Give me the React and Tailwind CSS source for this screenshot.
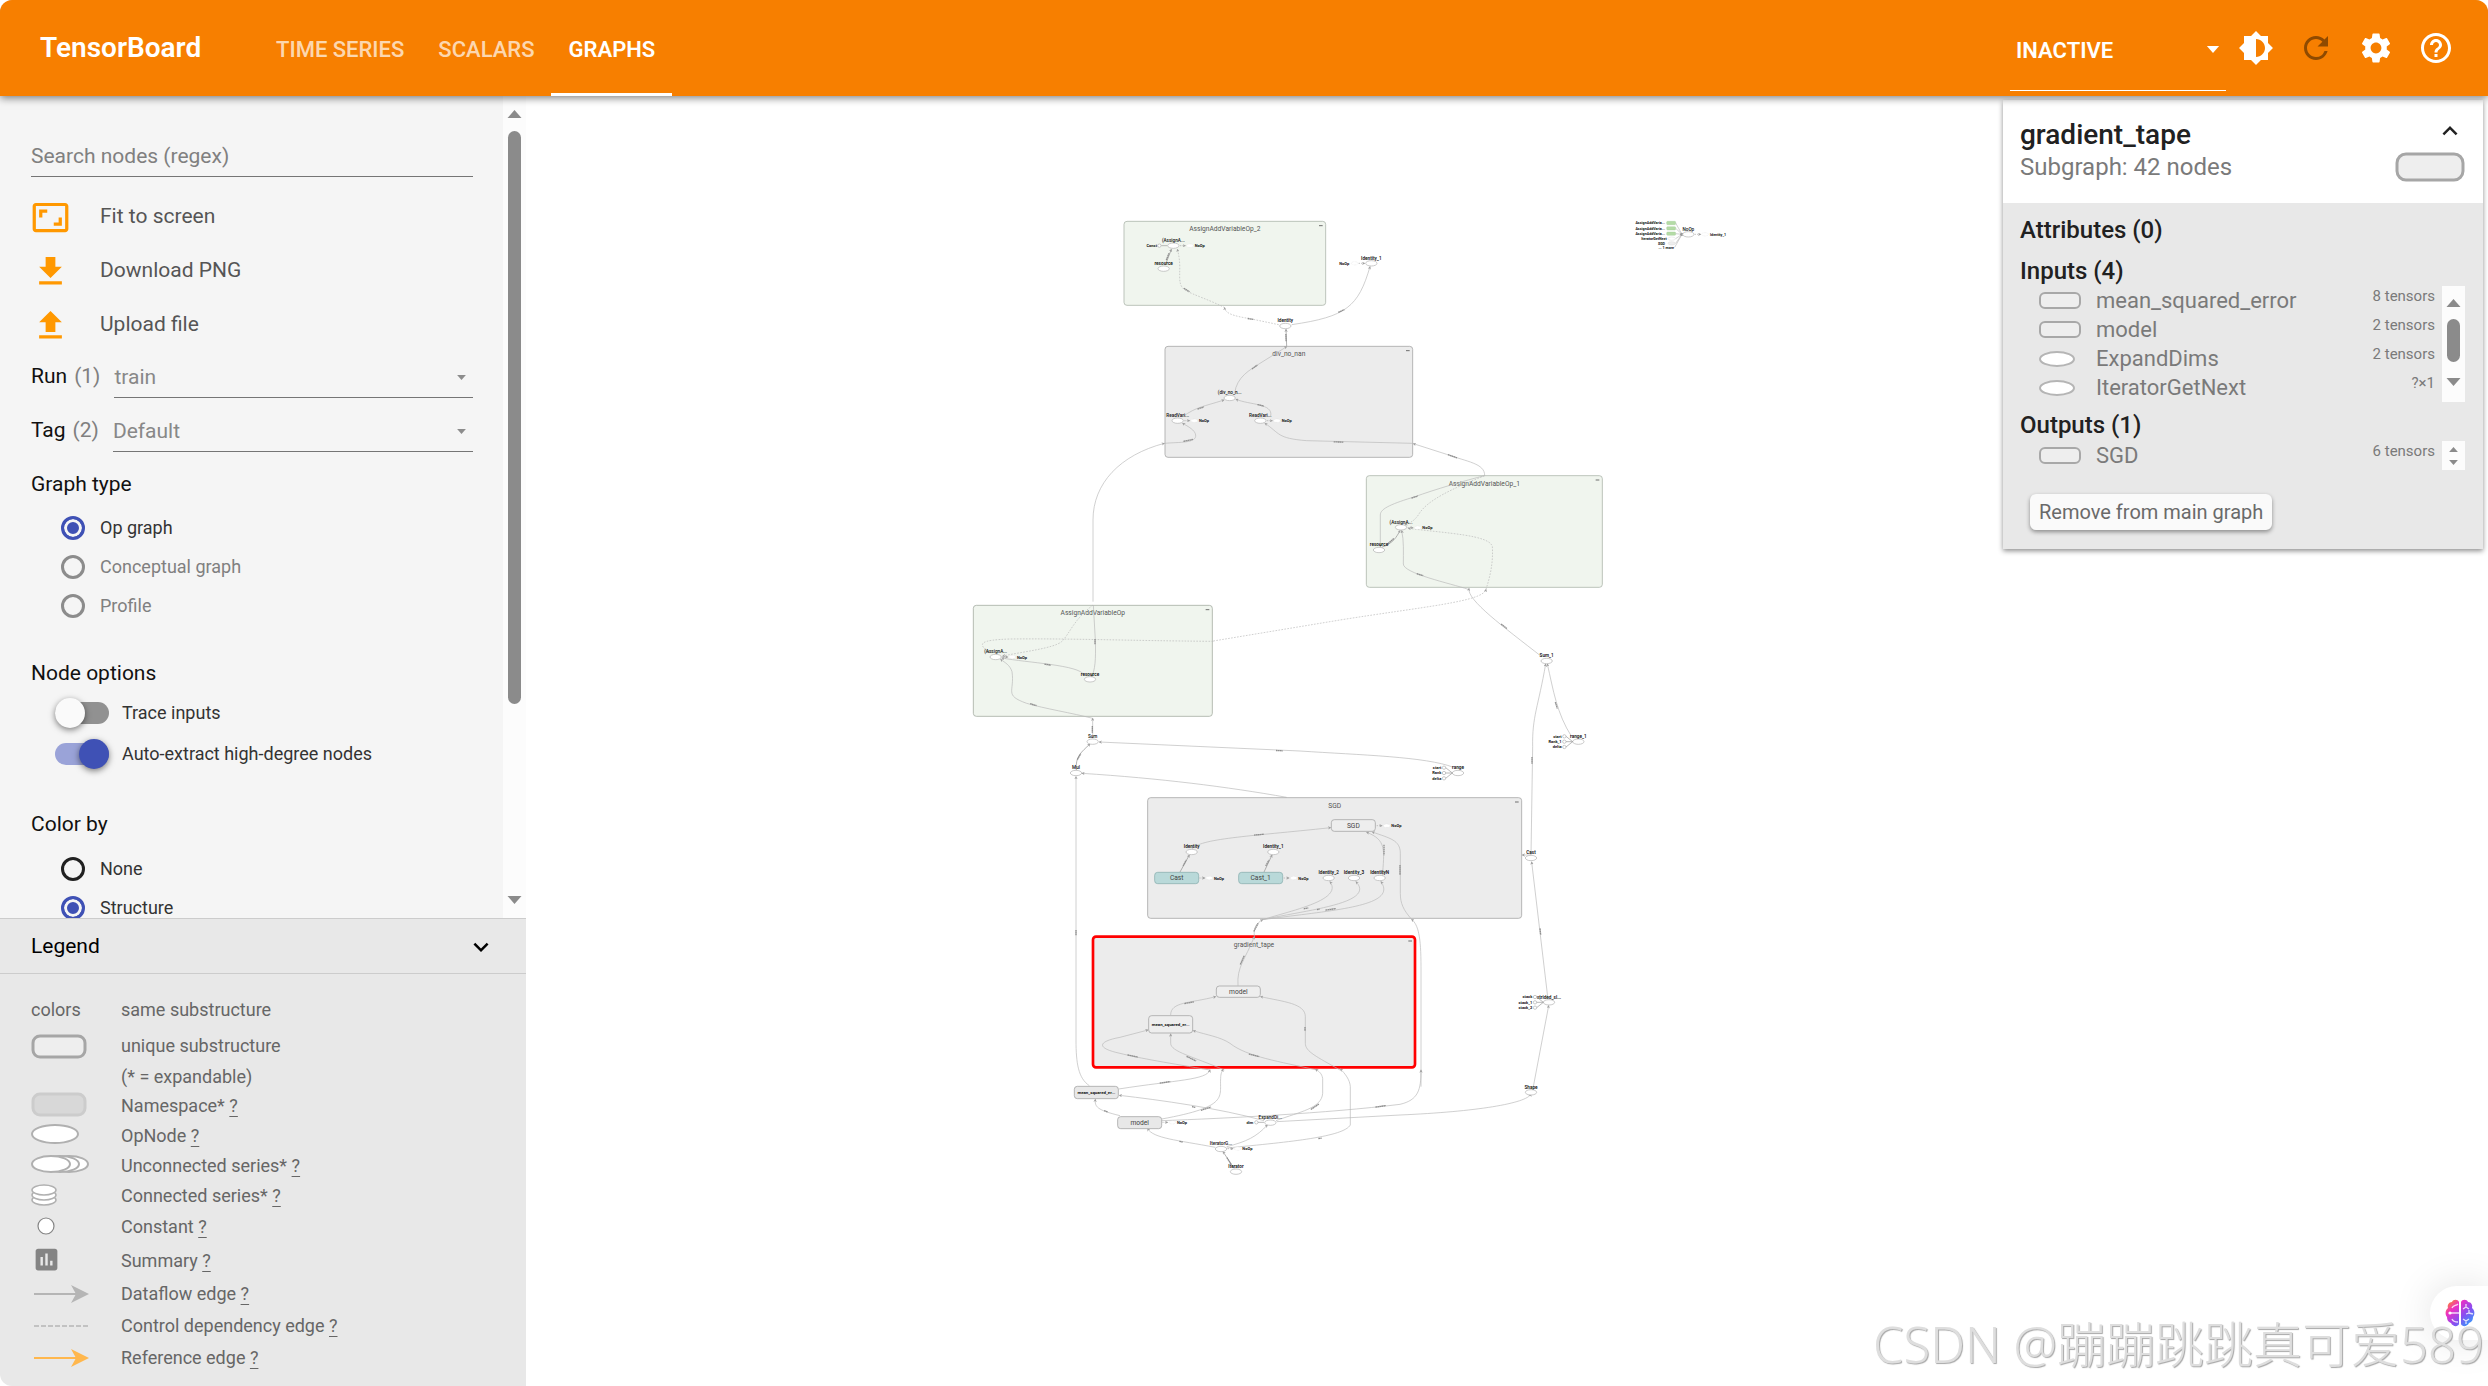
import React from "react";
import {
  MdAspectRatio,
  MdBrightness6,
  MdExpandLess,
  MdExpandMore,
  MdHelpOutline,
  MdInsertChart,
  MdRefresh,
  MdSettings,
} from "react-icons/md";

/* ---------- small shared pieces ---------- */

function Triangle({ up, className = "" }) {
  return (
    <svg viewBox="0 0 14 8" className={className} aria-hidden="true">
      <path d={up ? "M0 8 7 0l7 8z" : "M0 0h14L7 8z"} fill="currentColor" />
    </svg>
  );
}

function Radio({ name, label, checked, disabled }) {
  return (
    <label className={"flex h-[39px] items-center gap-[15px] pl-[30px] text-lg " + (disabled ? "text-[#808080]" : "text-[#333]")}>
      <input
        type="radio"
        name={name}
        defaultChecked={checked}
        disabled={disabled}
        className="size-6 appearance-none rounded-full border-3 border-[#212121] checked:border-[#3f51b5] checked:bg-[#3f51b5] checked:shadow-[inset_0_0_0_3px_#f5f5f5] disabled:border-[#8c8c8c]"
      />
      {label}
    </label>
  );
}

function Toggle({ label, checked }) {
  return (
    <label className="flex h-[41px] items-center gap-[13px] pl-6 text-lg text-[#333]">
      <input
        type="checkbox"
        role="switch"
        defaultChecked={checked}
        className="h-[22px] w-[54px] appearance-none rounded-full bg-[#919191] before:-mt-1 before:block before:size-[30px] before:rounded-full before:bg-[#fafafa] before:shadow-[0_2px_6px_rgba(0,0,0,0.5)] before:content-[''] checked:bg-[#9aa3d8] checked:before:ml-6 checked:before:bg-[#3f51b5]"
      />
      {label}
    </label>
  );
}

function Picker({ id, label, count, value }) {
  return (
    <div className="flex h-[42px] items-stretch gap-[14px] text-[21px]">
      <label htmlFor={id} className="flex items-center gap-[7px] text-[#111]">
        {label} <span className="text-[#808080]">{count}</span>
      </label>
      <div className="flex flex-1 items-center border-b border-[#757575] pt-0.5 pr-[7px]">
        <select id={id} className="flex-1 appearance-none bg-transparent text-[#888] outline-none">
          <option>{value}</option>
        </select>
        <Triangle className="h-[5px] w-[9px] text-[#8c8c8c]" />
      </div>
    </div>
  );
}

/* ---------- header ---------- */

function Header() {
  const tabs = ["TIME SERIES", "SCALARS", "GRAPHS"];
  return (
    <header className="z-20 flex h-24 shrink-0 items-stretch bg-[#f77f00] text-[22px] font-medium text-white shadow-[0_2px_8px_rgba(0,0,0,0.5)]">
      <h1 className="flex w-[259px] items-center pl-10 text-[28px] font-semibold">TensorBoard</h1>
      <nav className="flex flex-1">
        {tabs.map((t) => (
          <button
            key={t}
            className={
              "border-b-3 px-[17px] pt-1.5 " +
              (t === "GRAPHS" ? "border-white font-semibold" : "border-transparent text-white/70")
            }
          >
            {t}
          </button>
        ))}
      </nav>
      <div className="mb-[5px] flex w-[216px] items-center border-b border-white pt-2 pr-1.5 pl-1.5">
        <select aria-label="Plugins" className="flex-1 appearance-none bg-transparent pt-0.5 font-semibold outline-none">
          <option>INACTIVE</option>
        </select>
        <Triangle className="h-[7px] w-[14px]" />
      </div>
      <div className="flex pr-[22px] text-[36px]">
        <button aria-label="Theme" className="flex w-[60px] items-center justify-center"><MdBrightness6 /></button>
        <button aria-label="Reload" className="flex w-[60px] items-center justify-center text-[#8f4a00]"><MdRefresh /></button>
        <button aria-label="Settings" className="flex w-[60px] items-center justify-center"><MdSettings /></button>
        <button aria-label="Help" className="flex w-[60px] items-center justify-center"><MdHelpOutline /></button>
      </div>
    </header>
  );
}

/* ---------- sidebar ---------- */

function Action({ icon, children }) {
  return (
    <button className="flex h-[54px] items-center gap-[30px] pt-0.5 text-[21px] text-[#555]">
      <span className="text-[39px] text-[#ff9800]">{icon}</span>
      {children}
    </button>
  );
}

const arrowIcon = (d) => (
  <svg viewBox="0 0 24 24" width="1em" height="1em" fill="currentColor" aria-hidden="true">
    <path d={d} />
  </svg>
);

const heading = "text-[21px] leading-7 text-[#111]";

function Controls() {
  return (
    <div className="flex min-h-0 flex-1">
      <div className="flex flex-1 flex-col overflow-hidden bg-[#f5f5f5] pt-10 pr-[30px] pl-[31px] *:shrink-0">
        <input
          aria-label="Search nodes (regex)"
          placeholder="Search nodes (regex)"
          className="mb-3 h-[41px] border-b border-[#757575] bg-transparent text-[21px] outline-none placeholder:text-[#808080]"
        />
        <Action icon={<MdAspectRatio />}>Fit to screen</Action>
        <Action icon={arrowIcon("M19 9h-4V3H9v6H5l7 7 7-7zM5 18v2h14v-2H5z")}>Download PNG</Action>
        <Action icon={arrowIcon("M9 16h6v-6h4l-7-7-7 7h4zm-4 2h14v2H5z")}>Upload file</Action>
        <div className="mt-[5px] flex flex-col gap-3">
          <Picker id="run" label="Run" count="(1)" value="train" />
          <Picker id="tag" label="Tag" count="(2)" value="Default" />
        </div>
        <h2 className={heading + " mt-[18px] mb-[10px]"}>Graph type</h2>
        <Radio name="type" label="Op graph" checked />
        <Radio name="type" label="Conceptual graph" disabled />
        <Radio name="type" label="Profile" disabled />
        <h2 className={heading + " mt-[34px] mb-[5px]"}>Node options</h2>
        <Toggle label="Trace inputs" />
        <Toggle label="Auto-extract high-degree nodes" checked />
        <h2 className={heading + " mt-[36px] mb-[11px]"}>Color by</h2>
        <Radio name="color" label="None" />
        <Radio name="color" label="Structure" checked />
      </div>
      <div className="flex w-[23px] flex-col items-center bg-[#fcfcfc] pt-[14px] pb-[14px] text-[#8b8b8b]">
        <Triangle up className="h-2 w-[15px]" />
        <div className="mt-[13px] h-[573px] w-[13px] rounded-full bg-[#8b8b8b]" />
        <Triangle className="mt-auto h-2 w-[15px]" />
      </div>
    </div>
  );
}

const ring = { fill: "#fff", stroke: "#b0b0b0", strokeWidth: 2 };

const legendRows = [
  ["h-[38px]", "colors", "same substructure", false],
  ["h-[34px]", <rect x="2" y="2" width="52" height="21" rx="7" fill="#eee" stroke="#a6a6a6" strokeWidth="3" />, "unique substructure", false],
  ["h-7", null, "(* = expandable)", false],
  ["h-[30px]", <rect x="2" y="0" width="52" height="21" rx="7" fill="#d8d8d8" stroke="#ccc" strokeWidth="3" />, "Namespace*", true],
  ["h-[30px]", <ellipse cx="24" cy="10" rx="23" ry="9" {...ring} />, "OpNode", true],
  [
    "h-[30px]",
    <>
      <ellipse cx="38" cy="10" rx="19" ry="8" {...ring} />
      <ellipse cx="29" cy="10" rx="19" ry="8" {...ring} />
      <ellipse cx="20" cy="10" rx="19" ry="8" {...ring} />
    </>,
    "Unconnected series*",
    true,
  ],
  [
    "h-[30px]",
    <>
      <ellipse cx="13" cy="16" rx="12" ry="5" {...ring} strokeWidth="1.5" />
      <ellipse cx="13" cy="11" rx="12" ry="5" {...ring} strokeWidth="1.5" />
      <ellipse cx="13" cy="6" rx="12" ry="5" {...ring} strokeWidth="1.5" />
    </>,
    "Connected series*",
    true,
  ],
  ["h-8", <circle cx="15" cy="11" r="8" fill="#fff" stroke="#848484" strokeWidth="1.2" />, "Constant", true],
  ["h-9", "summary", "Summary", true],
  ["h-[30px]", <><path d="M3 12h45" stroke="#b5b5b5" strokeWidth="2" /><path d="M40 3l18 9-18 9 5-9z" fill="#b5b5b5" /></>, "Dataflow edge", true],
  ["h-[34px]", <path d="M3 12h55" stroke="#b5b5b5" strokeWidth="1.5" strokeDasharray="5 2" />, "Control dependency edge", true],
  ["h-[30px]", <><path d="M3 12h45" stroke="#ffb74d" strokeWidth="2" /><path d="M40 3l18 9-18 9 5-9z" fill="#ffb74d" /></>, "Reference edge", true],
];

function LegendIcon({ icon }) {
  if (icon === "colors") return <span>colors</span>;
  if (icon === "summary") return <MdInsertChart className="mb-1 size-[29px] text-[#848484]" />;
  return (
    <svg viewBox="0 0 60 25" className="h-[25px] w-[60px] overflow-visible" fill="none" aria-hidden="true">
      {icon}
    </svg>
  );
}

function Legend() {
  return (
    <section className="shrink-0 bg-[#e8e8e8]">
      <button className="flex h-14 w-full items-center justify-between border-y border-[#ccc] pt-0.5 pr-[30px] pl-[31px] text-[21px] text-black">
        Legend
        <MdExpandMore className="size-[30px]" />
      </button>
      <ul className="pt-[17px] pb-[13px] pl-[31px] text-lg text-[#666]">
        {legendRows.map(([h, icon, text, help]) => (
          <li key={text} className={"flex items-center " + h}>
            <span className={"flex w-[90px] shrink-0 items-center " + (icon === "summary" ? "pl-px" : "")}>
              <LegendIcon icon={icon} />
            </span>
            <span>
              {text} {help && <a href="#help" className="underline underline-offset-4">?</a>}
            </span>
          </li>
        ))}
      </ul>
    </section>
  );
}

/* ---------- graph drawing ---------- */

/* Each region has its own origin; one unit is a third of a canvas unit. */
function Region({ x, y, children }) {
  return <g transform={`translate(${x} ${y}) scale(${1 / 3})`}>{children}</g>;
}

function Edge({ d, dashed, dark }) {
  return (
    <path
      d={d}
      fill="none"
      stroke={dark ? "#8c8c8c" : "#b8b8b8"}
      strokeWidth={2}
      strokeDasharray={dashed ? "5 4" : undefined}
      markerEnd="url(#tip)"
    />
  );
}

function Op({ x, y, label, dark }) {
  return (
    <>
      <ellipse cx={x} cy={y} rx="17" ry="8" fill="#fff" stroke="#b0b0b0" strokeWidth="2" />
      {label && (
        <text x={x} y={y - 11} textAnchor="middle" fontSize="14" fontWeight={dark ? 600 : 500} fill="#111">
          {label}
        </text>
      )}
    </>
  );
}

function NoOp({ x, y, flip }) {
  return (
    <>
      <ellipse cx={x} cy={y} rx="10" ry="5" fill="#fff" stroke="#ccc" strokeDasharray="2 2" />
      <path d={flip ? `M${x + 12} ${y}h18` : `M${x - 30} ${y}h16`} stroke="#aaa" strokeWidth="2" strokeDasharray="4 3" markerEnd="url(#tip)" />
      <text x={flip ? x - 16 : x + 14} y={y + 5} textAnchor={flip ? "end" : "start"} fontSize="12" fontWeight="700" fill="#111">
        NoOp
      </text>
    </>
  );
}

function Box({ x, y, w, h, label, fill = "#ececec", stroke = "#a8a8a8", selected, cx }) {
  return (
    <>
      <rect x={x} y={y} width={w} height={h} rx="9" fill={fill} stroke={selected ? "#f00" : stroke} strokeWidth={selected ? 8 : 2.5} />
      <text x={cx || x + w / 2} y={y + 30} textAnchor="middle" fontSize="20" fill="#555">{label}</text>
      <path d={`M${x + w - 20} ${y + 13}h11`} stroke="#555" strokeWidth="2.5" />
    </>
  );
}

function Group({ x, y, h = 34, label, fill = "#eee", stroke = "#a8a8a8", small }) {
  return (
    <>
      <rect x={x} y={y} width="132" height={h} rx="9" fill={fill} stroke={stroke} strokeWidth="2.5" />
      <text x={x + 66} y={y + h / 2 + (small ? 4 : 7)} textAnchor="middle" fontSize={small ? 13 : 20} fontWeight={small ? 700 : 400} fill={small ? "#111" : "#444"}>
        {label}
      </text>
    </>
  );
}

/* Tensor-shape caption seen as a short dark run along an edge. */
function Mark({ x, y, a = 0, l = 26 }) {
  return <path d={`M${-l / 2} 0h${l}`} transform={`translate(${x} ${y}) rotate(${a})`} stroke="#8f8f8f" strokeWidth="4" strokeDasharray="5 1" />;
}

const tiny = { textAnchor: "end", fontSize: 12, fontWeight: 700, fill: "#111" };

function Constants({ x, y, names }) {
  return names.map((n, i) => (
    <g key={n}>
      <circle cx={x} cy={y + (i - 1) * 16} r="5" fill="#fff" stroke="#999" strokeWidth="1.5" />
      <text x={x - 8} y={y + (i - 1) * 16 + 4} {...tiny}>{n}</text>
      <path d={`M${x + 5} ${y + (i - 1) * 16}L${x + 25} ${y}`} stroke="#999" strokeWidth="2" />
    </g>
  ));
}

const green = "#f0f5ee";

function Graph() {
  return (
    <svg viewBox="526 96 1962 1290" className="h-full w-full" role="img" aria-label="Computation graph">
      <defs>
        <marker id="tip" viewBox="0 0 10 10" refX="8" refY="5" markerWidth="10" markerHeight="10" markerUnits="userSpaceOnUse" orient="auto">
          <path d="M0 0 10 5 0 10 3 5z" fill="#a0a0a0" />
        </marker>
      </defs>

      <Region x={1100} y={200}>
        <Box x={72} y={64} w={605} h={252} label="AssignAddVariableOp_2" fill={green} stroke="#b0b8ae" />
        <Box x={195} y={439} w={743} h={333} label="div_no_nan" />
        <Edge d="M198 190L214 148" dark />
        <Edge d="M374 323C330 300 280 285 255 270C225 250 250 210 232 148" dashed />
        <Edge d="M536 374L450 356C400 348 375 340 374 323" dashed />
        <Edge d="M575 374C740 350 775 320 810 200" />
        <Edge d="M560 438L558 388" dark />
        <Edge d="M404 580C410 530 450 510 480 490L560 440" />
        <Edge d="M248 650C290 620 310 620 372 600" />
        <Edge d="M512 648C520 610 450 615 408 598" />
        <Edge d="M193 730C240 726 290 730 287 705C285 690 265 680 248 670" />
        <Edge d="M938 730L620 722C530 715 540 700 495 670" />
        <Edge d="M-21 1205V960C-21 850 60 765 193 730" />
        <Mark x={203} y={170} a={-68} l={22} />
        <Mark x={260} y={270} a={32} l={20} />
        <Mark x={452} y={357} a={10} l={18} />
        <Mark x={724} y={333} a={-25} l={20} />
        <Mark x={558} y={413} a={88} l={22} />
        <Mark x={464} y={501} a={-36} l={20} />
        <Mark x={302} y={624} a={-18} l={20} />
        <Mark x={482} y={616} a={14} l={20} />
        <Mark x={265} y={721} a={-12} l={30} />
        <Mark x={716} y={726} a={2} l={30} />
        <text x={171} y={141} {...tiny}>Const</text>
        <circle cx="178" cy="137" r="5" fill="#fff" stroke="#999" strokeWidth="1.5" />
        <path d="M184 137h18" stroke="#999" strokeWidth="2" />
        <Op x={220} y={137} label="(AssignA..." />
        <NoOp x={270} y={137} />
        <Op x={191} y={206} label="resource" dark />
        <Op x={814} y={190} label="Identity_1" dark />
        <NoOp x={764} y={190} flip />
        <Op x={556} y={378} label="Identity" dark />
        <Op x={389} y={594} label="(div_no_n..." />
        <Op x={233} y={662} label="ReadVari..." />
        <NoOp x={283} y={662} />
        <Op x={481} y={662} label="ReadVari..." />
        <NoOp x={531} y={662} />
      </Region>

      <Region x={1340} y={420}>
        <Box x={79} y={167} w={708} h={335} label="AssignAddVariableOp_1" fill={green} stroke="#b0b8ae" />
        <Edge d="M434 167C435 130 380 125 320 103L220 71" />
        <Edge d="M434 167C380 180 280 210 225 230C160 250 120 265 121 285V380" />
        <Edge d="M434 167C340 205 260 240 235 285C220 305 215 305 195 315" dashed />
        <Edge d="M125 382C160 370 170 350 180 332" dark />
        <Edge d="M385 508C330 490 190 460 190 432C190 400 192 360 185 332" />
        <Edge d="M438 508C450 470 460 430 457 380C450 345 320 340 205 325" dashed />
        <Edge d="M-380 663L0 600C250 560 430 545 438 508" dashed />
        <Mark x={338} y={109} a={20} l={30} />
        <Mark x={224} y={231} a={-18} l={20} />
        <Mark x={240} y={464} a={16} l={20} />
        <Mark x={153} y={363} a={-42} l={24} />
        <Op x={183} y={322} label="(AssignA..." />
        <NoOp x={233} y={323} />
        <Op x={117} y={390} label="resource" dark />
      </Region>

      <Region x={960} y={580}>
        <Box x={40} y={76} w={717} h={333} label="AssignAddVariableOp" fill={green} stroke="#a8b0a6" />
        <Edge d="M400 75L406 180C408 240 405 270 395 290" />
        <Edge d="M399 75C340 120 330 160 305 185C280 205 190 215 128 228" dashed />
        <Edge d="M760 184C500 182 340 175 150 177C60 180 50 190 88 218" dashed />
        <Edge d="M372 285C360 255 200 248 126 234" />
        <Edge d="M398 415C340 400 250 385 200 370C130 345 165 335 156 275C150 255 135 248 122 238" />
        <Edge d="M398 475V415" />
        <Edge d="M349 570C345 530 365 515 390 492" dark />
        <Edge d="M1480 562C1400 530 1200 525 1020 513L418 486" />
        <Edge d="M980 652C800 620 600 595 366 580" />
        <Mark x={263} y={254} a={8} l={20} />
        <Mark x={405} y={185} a={90} l={16} />
        <Mark x={220} y={374} a={18} l={20} />
        <Mark x={397} y={448} a={90} l={20} />
        <Mark x={357} y={530} a={-60} l={20} />
        <Mark x={958} y={512} a={3} l={20} />
        <Op x={107} y={231} label="(AssignA..." />
        <NoOp x={157} y={231} />
        <Op x={390} y={298} label="resource" dark />
        <Op x={398} y={485} label="Sum" />
        <Op x={348} y={579} label="Mul" />
      </Region>

      <Region x={1420} y={580}>
        <Edge d="M365 230C250 140 140 60 147 25" />
        <Edge d="M333 825L338 500C336 410 355 380 377 252" />
        <Edge d="M455 470C410 400 400 330 382 252" />
        <Mark x={252} y={139} a={38} l={22} />
        <Mark x={409} y={376} a={72} l={20} />
        <Mark x={336} y={541} a={90} l={20} />
        <Op x={380} y={243} label="Sum_1" dark />
        <Op x={475} y={485} label="range_1" dark />
        <Constants x={433} y={485} names={["start", "Rank_1", "delta"]} />
        <Op x={114} y={579} label="range" dark />
        <Constants x={72} y={579} names={["start", "Rank", "delta"]} />
      </Region>

      <Region x={1120} y={780}>
        <Box x={83} y={53} w={1122} h={362} label="SGD" />
        <Box x={-81} y={470} w={966} h={392} label="gradient_tape" selected cx={402} />
        <Edge d="M215 208C240 175 380 170 632 143" />
        <Edge d="M180 276L208 225" dark />
        <Edge d="M432 276L456 225" dark />
        <Edge d="M428 419C520 390 670 360 630 305" />
        <Edge d="M428 419C560 390 770 370 708 305" />
        <Edge d="M428 419C640 390 835 380 783 305" />
        <Edge d="M787 290C793 210 800 180 740 157" />
        <Edge d="M875 418C850 390 841 370 841 340V220C841 180 810 175 757 156" />
        <Edge d="M403 470C400 440 410 430 428 419" />
        <Edge d="M903 920V560C903 470 895 435 875 418" />
        <Edge d="M354 617C350 560 375 540 403 470" />
        <Edge d="M152 705C152 665 210 670 287 650" />
        <Edge d="M660 870C590 830 556 815 556 790V710C556 670 490 665 422 650" />
        <Edge d="M313 870C220 830 152 815 152 790V762" />
        <Edge d="M590 870C480 845 380 830 330 790C300 770 260 765 220 752" />
        <Edge d="M270 870C150 850 60 835 0 820C-70 805 -70 785 0 772L84 750" />
        <Edge d="M1233 225H1207" />
        <Edge d="M1283 650L1235 246" />
        <Edge d="M1240 920L1286 677" />
        <Mark x={194} y={249} a={-62} l={20} />
        <Mark x={442} y={249} a={-62} l={20} />
        <Mark x={417} y={164} a={-5} l={30} />
        <Mark x={792} y={210} a={90} l={32} />
        <Mark x={840} y={270} a={90} l={30} />
        <Mark x={558} y={385} a={-12} l={14} />
        <Mark x={595} y={388} a={-12} l={8} />
        <Mark x={632} y={388} a={-8} l={32} />
        <Mark x={408} y={442} a={-62} l={28} />
        <Mark x={367} y={540} a={-66} l={30} />
        <Mark x={208} y={668} a={-10} l={30} />
        <Mark x={555} y={747} a={90} l={12} />
        <Mark x={38} y={828} a={12} l={32} />
        <Mark x={214} y={836} a={26} l={32} />
        <Mark x={402} y={826} a={14} l={32} />
        <Mark x={1261} y={455} a={84} l={20} />
        <Group x={634} y={119} h={35} label="SGD" />
        <NoOp x={800} y={137} />
        <Op x={215} y={216} label="Identity" dark />
        <Op x={460} y={216} label="Identity_1" dark />
        <Group x={104} y={277} label="Cast" fill="#b9d9d9" stroke="#8fb3b3" />
        <NoOp x={268} y={294} />
        <Group x={356} y={277} label="Cast_1" fill="#b9d9d9" stroke="#8fb3b3" />
        <NoOp x={521} y={294} />
        <Op x={626} y={294} label="Identity_2" dark />
        <Op x={702} y={294} label="Identity_3" dark />
        <Op x={779} y={294} label="IdentityN" dark />
        <Group x={289} y={618} label="model" />
        <Group x={86} y={707} h={52} label="mean_squared_er..." small />
        <Op x={1233} y={234} label="Cast" dark />
        <Op x={1287} y={667} label="strided_sl..." dark />
        <Constants x={1245} y={667} names={["stack", "stack_1", "stack_2"]} />
      </Region>

      <Region x={1060} y={1050}>
        <Edge d="M88 107C55 85 48 40 48 -30V-820" />
        <Mark x={48} y={-352} a={90} l={16} />
        <Edge d="M176 117C350 90 440 90 450 60" />
        <Edge d="M305 207C510 170 478 140 482 85C482 70 486 65 489 58" />
        <Edge d="M648 212C720 185 785 175 788 130V85C785 70 778 65 767 58" />
        <Edge d="M500 294C700 275 850 260 871 225V110C870 90 855 70 841 57" />
        <Edge d="M180 197C110 180 104 170 106 148" />
        <Edge d="M612 212C480 175 300 150 178 136" />
        <Edge d="M466 292C350 270 280 265 263 236" />
        <Edge d="M500 290C560 275 590 260 622 225" />
        <Edge d="M522 355L489 305" dark />
        <Edge d="M305 212C500 205 800 190 1020 163C1075 150 1083 120 1083 60" />
        <Edge d="M650 215L1020 195C1250 185 1400 160 1413 132" />
        <Mark x={315} y={97} a={-8} l={32} />
        <Mark x={438} y={176} a={-18} l={32} />
        <Mark x={765} y={170} a={-34} l={30} />
        <Mark x={401} y={171} a={12} l={10} />
        <Mark x={138} y={184} a={20} l={12} />
        <Mark x={363} y={275} a={12} l={10} />
        <Mark x={780} y={265} a={-6} l={10} />
        <Mark x={507} y={333} a={58} l={24} />
        <Mark x={962} y={169} a={-8} l={32} />
        <Group x={43} y={109} h={37} label="mean_squared_er..." small fill="#e8e8e8" />
        <Group x={173} y={200} h={36} label="model" fill="#e8e8e8" />
        <NoOp x={337} y={217} />
        <text x={580} y={221} {...tiny}>dim</text>
        <circle cx="589" cy="217" r="5" fill="#fff" stroke="#999" strokeWidth="1.5" />
        <path d="M594 217h18" stroke="#999" strokeWidth="2" />
        <Op x={631} y={218} label="ExpandDi..." />
        <Op x={483} y={297} label="IteratorG..." />
        <NoOp x={533} y={296} />
        <Op x={528} y={365} label="Iterator" dark />
        <Op x={1413} y={127} label="Shape" dark />
      </Region>

      <Region x={1620} y={210}>
        {["AssignAddVaria...", "AssignAddVaria...", "AssignAddVaria..."].map((n, i) => (
          <g key={i}>
            <rect x="140" y={34 + i * 16} width="27" height="10" rx="3" fill="#b4dba6" stroke="#9cc78e" />
            <text x="135" y={43 + i * 16} {...tiny} fontSize={11}>{n}</text>
            <path d={`M167 ${39 + i * 16}L186 73`} stroke="#bbb" strokeWidth="2" fill="none" />
          </g>
        ))}
        <ellipse cx="155" cy="86" rx="11" ry="5" fill="#fff" stroke="#ccc" />
        <ellipse cx="155" cy="100" rx="11" ry="5" fill="#eee" stroke="#ccc" />
        <text x="140" y="90" {...tiny} fontSize={11}>IteratorGetNext</text>
        <text x="135" y="104" {...tiny} fontSize={11}>SGD</text>
        <text x="162" y="117" {...tiny} fontSize={11}>... 1 more</text>
        <path d="M167 86L186 73M167 100L186 73M164 112L186 73" stroke="#bbb" strokeWidth="2" />
        <circle cx="185" cy="73" r="5" fill="#999" />
        <Op x={205} y={73} label="NoOp" />
        <path d="M224 73h18" stroke="#aaa" strokeWidth="2" strokeDasharray="4 3" markerEnd="url(#tip)" />
        <ellipse cx="255" cy="73" rx="10" ry="5" fill="#fff" stroke="#ccc" strokeDasharray="2 2" />
        <text x="270" y="77" {...tiny} fontSize={11} textAnchor="start">Identity_1</text>
      </Region>
    </svg>
  );
}

/* ---------- node details ---------- */

function NodeRow({ name, note, oval }) {
  return (
    <li className="flex h-[29px] items-center">
      <svg viewBox="0 0 42 18" className="mr-[15px] h-[18px] w-[42px]" aria-hidden="true">
        {oval ? (
          <ellipse cx="18" cy="9" rx="17" ry="7" fill="#fff" stroke="#b5b5b5" strokeWidth="2" />
        ) : (
          <rect x="1" y="1" width="40" height="15" rx="5" fill="#eee" stroke="#a8a8a8" strokeWidth="2" />
        )}
      </svg>
      <a href="#node" className="flex-1 text-[22px] leading-7 text-[#7a7a7a]">{name}</a>
      <span className="pb-2 text-[15px] text-[#7a7a7a]">{note}</span>
    </li>
  );
}

function Details() {
  return (
    <aside className="absolute top-1 right-[5px] w-[480px] bg-[#e8e8e8] text-[#212121] shadow-[0_2px_5px_rgba(0,0,0,0.45)]">
      <div className="flex h-[103px] justify-between bg-white pr-[18px] pl-[17px]">
        <div className="pt-[18px]">
          <h2 className="text-[28px] leading-[33px] font-medium">gradient_tape</h2>
          <p className="text-2xl text-[#7a7a7a]">Subgraph: 42 nodes</p>
        </div>
        <div className="flex flex-col items-end pt-4">
          <button aria-label="Collapse"><MdExpandLess className="size-[30px]" /></button>
          <svg viewBox="0 0 70 30" className="mt-1.5 h-[30px] w-[70px]" aria-hidden="true">
            <rect x="2" y="2" width="66" height="26" rx="9" fill="#eee" stroke="#a6a6a6" strokeWidth="3" />
          </svg>
        </div>
      </div>
      <div className="pt-[11px] pr-[18px] pb-[19px] pl-[17px]">
        <h3 className="text-2xl font-medium">Attributes (0)</h3>
        <h3 className="mt-[10px] text-2xl leading-[30px] font-medium">Inputs (4)</h3>
        <div className="flex">
          <ul className="flex-1 pr-[7px] pl-[19px]">
            <NodeRow name="mean_squared_error" note="8 tensors" />
            <NodeRow name="model" note="2 tensors" />
            <NodeRow name="ExpandDims" note="2 tensors" oval />
            <NodeRow name="IteratorGetNext" note="?×1" oval />
          </ul>
          <div className="flex w-[23px] flex-col items-center bg-[#fcfcfc] pt-[13px] pb-4 text-[#8b8b8b]">
            <Triangle up className="h-2 w-[15px]" />
            <div className="mt-3 h-[43px] w-[13px] rounded-full bg-[#8b8b8b]" />
            <Triangle className="mt-auto h-2 w-[15px]" />
          </div>
        </div>
        <h3 className="mt-2 text-2xl leading-[31px] font-medium">Outputs (1)</h3>
        <div className="flex">
          <ul className="flex-1 pr-[7px] pl-[19px]">
            <NodeRow name="SGD" note="6 tensors" />
          </ul>
          <div className="flex w-[23px] flex-col items-center justify-center gap-2 bg-[#fcfcfc] text-[#8b8b8b]">
            <Triangle up className="h-[5px] w-[11px]" />
            <Triangle className="h-[5px] w-[11px]" />
          </div>
        </div>
        <button className="mt-6 ml-[10px] h-9 rounded-md bg-[#fafafa] px-[9px] text-xl text-[#6a6a6a] shadow-[0_2px_4px_rgba(0,0,0,0.4)]">
          Remove from main graph
        </button>
      </div>
    </aside>
  );
}

/* ---------- floating assistant and signature ---------- */

function Assistant() {
  return (
    <button
      aria-label="Assistant"
      className="absolute right-0 bottom-[46px] flex h-[54px] w-[58px] items-center rounded-l-full bg-white pl-[15px] shadow-[0_0_40px_rgba(0,0,0,0.12)]"
    >
      <svg viewBox="0 0 30 28" className="h-7 w-[30px]" aria-hidden="true">
        <defs>
          <linearGradient id="brain" x1="0" y1="0" x2="1" y2="1">
            <stop offset="0" stopColor="#ffa400" />
            <stop offset="0.3" stopColor="#ee2fc4" />
            <stop offset="0.6" stopColor="#8a4df0" />
            <stop offset="1" stopColor="#1cb4ff" />
          </linearGradient>
        </defs>
        <path
          d="M14 3C13 0 8 0 7 3C4 3 2 6 3 9C0 11 0 16 2 18C2 21 3 23 6 24C8 28 13 28 14 25ZM16 3C17 0 22 0 23 3C26 3 28 6 27 9C30 11 30 16 28 18C28 21 27 23 24 24C22 28 17 28 16 25Z"
          fill="url(#brain)"
        />
        <path
          d="M5 14h9M7 9c1-3 4-2 6-4M7 20c1 3 4 3 6 3M18 10l3-2 3 2M21 8V5M21 15l3-1 4 1M24 14v-3M18 20l3 2 3-2M21 22v3"
          fill="none"
          stroke="#fff"
          strokeOpacity="0.8"
          strokeWidth="1.3"
        />
        <circle cx="5" cy="14" r="1.6" fill="#fff" />
      </svg>
    </button>
  );
}

export default function App() {
  return (
    <div className="flex h-screen flex-col overflow-hidden rounded-xl bg-white font-['Roboto',sans-serif]">
      <Header />
      <div className="flex min-h-0 flex-1">
        <aside className="flex w-[526px] shrink-0 flex-col">
          <Controls />
          <Legend />
        </aside>
        <main className="relative min-w-0 flex-1 overflow-hidden bg-white">
          <Graph />
          <Details />
          <Assistant />
          <p className="absolute right-1 bottom-2 font-['Noto_Sans','Noto_Sans_CJK_SC',sans-serif] text-[49px] leading-[68px] font-light whitespace-nowrap text-[#dedede] [text-shadow:1px_1px_1px_#a8a8a8]">
            CSDN @蹦蹦跳跳真可爱589
          </p>
        </main>
      </div>
    </div>
  );
}
